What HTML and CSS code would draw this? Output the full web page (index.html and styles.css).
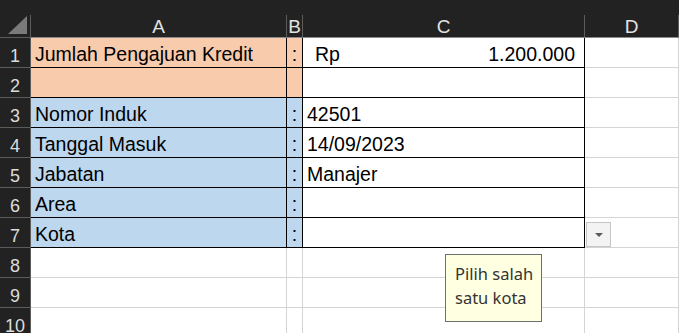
FILE: index.html
```html
<!DOCTYPE html>
<html lang="id">
  <head>
    <meta charset="UTF-8" />
    <title>Pengajuan Kredit</title>
    <link rel="stylesheet" href="styles.css">
  </head>
  <body>
    <div class="sheet">
      <!-- column headers -->
      <div class="corner"><span class="tri"></span></div>
      <div class="colhead">A</div>
      <div class="colhead">B</div>
      <div class="colhead">C</div>
      <div class="colhead">D</div>

      <!-- row 1 -->
      <div class="rownum">1</div>
      <div class="cell peach label">Jumlah Pengajuan Kredit</div>
      <div class="cell peach colon">:</div>
      <div class="cell value money"><span class="cur">Rp</span><span>1.200.000</span></div>
      <div class="cell"></div>

      <!-- row 2 -->
      <div class="rownum">2</div>
      <div class="cell peach label"></div>
      <div class="cell peach colon"></div>
      <div class="cell value"></div>
      <div class="cell"></div>

      <!-- row 3 -->
      <div class="rownum">3</div>
      <div class="cell blue label">Nomor Induk</div>
      <div class="cell blue colon">:</div>
      <div class="cell value">42501</div>
      <div class="cell"></div>

      <!-- row 4 -->
      <div class="rownum">4</div>
      <div class="cell blue label">Tanggal Masuk</div>
      <div class="cell blue colon">:</div>
      <div class="cell value">14/09/2023</div>
      <div class="cell"></div>

      <!-- row 5 -->
      <div class="rownum">5</div>
      <div class="cell blue label">Jabatan</div>
      <div class="cell blue colon">:</div>
      <div class="cell value">Manajer</div>
      <div class="cell"></div>

      <!-- row 6 -->
      <div class="rownum">6</div>
      <div class="cell blue label">Area</div>
      <div class="cell blue colon">:</div>
      <div class="cell value"></div>
      <div class="cell"></div>

      <!-- row 7 -->
      <div class="rownum">7</div>
      <div class="cell blue label">Kota</div>
      <div class="cell blue colon">:</div>
      <div class="cell value active"></div>
      <div class="cell"></div>

      <!-- empty rows -->
      <div class="rownum">8</div>
      <div class="cell"></div><div class="cell"></div><div class="cell"></div><div class="cell"></div>
      <div class="rownum">9</div>
      <div class="cell"></div><div class="cell"></div><div class="cell"></div><div class="cell"></div>
      <div class="rownum">10</div>
      <div class="cell"></div><div class="cell"></div><div class="cell"></div><div class="cell"></div>

      <!-- dropdown arrow + input message -->
      <div class="dropdown"><span class="arrow"></span></div>
      <div class="tooltip">Pilih salah<br />satu kota</div>
    </div>
  </body>
</html>
```

FILE: styles.css
```css
body {
  margin: 0;
  padding: 0;
  background-color: #222222;
  font-family: "Liberation Sans", Arial, sans-serif;
  overflow: hidden;
}

.sheet {
  position: relative;
  display: grid;
  grid-template-columns: 31px 256px 16px 282px 94px;
  grid-template-rows: 23px repeat(10, 30px);
  margin-top: 15px;
}

.corner,
.colhead,
.rownum {
  box-sizing: border-box;
  background-color: #222222;
  color: #e3e3e3;
  border-right: 1px solid #5c5c5c;
  border-bottom: 1px solid #5c5c5c;
}

.corner {
  position: relative;
}

.corner .tri {
  position: absolute;
  right: 3px;
  bottom: 3px;
  width: 0;
  height: 0;
  border-left: 19px solid transparent;
  border-bottom: 18px solid #7a7a7a;
}

.colhead {
  font-size: 19px;
  text-align: center;
  line-height: 24px;
  border-bottom-color: #8a8a8a;
}

.rownum {
  font-size: 18px;
  text-align: center;
  line-height: 24px;
  padding-top: 6px;
  color: #dcdcdc;
}

.cell {
  box-sizing: border-box;
  background-color: white;
  color: black;
  font-size: 19.5px;
  line-height: 24px;
  padding: 4px 4px 0;
  white-space: nowrap;
  border-right: 1px solid #d4d4d4;
  border-bottom: 1px solid #d4d4d4;
}

.peach {
  background-color: #f8cbad;
}

.blue {
  background-color: #bdd7ee;
}

.label,
.colon,
.value {
  border-right-color: #000;
  border-bottom-color: #000;
}

.colon {
  text-align: center;
  padding: 4px 0 0;
}

.money {
  display: flex;
  justify-content: space-between;
  padding-left: 12px;
  padding-right: 9px;
}

.dropdown {
  position: absolute;
  left: 586px;
  top: 207px;
  width: 25px;
  height: 25px;
  box-sizing: border-box;
  background-color: #f3f3f3;
  border: 1px solid #c6c6c6;
}

.dropdown .arrow {
  position: absolute;
  left: 8px;
  top: 10px;
  width: 0;
  height: 0;
  border-left: 4px solid transparent;
  border-right: 4px solid transparent;
  border-top: 4px solid #5a5a5a;
}

.tooltip {
  position: absolute;
  left: 445px;
  top: 239px;
  width: 97px;
  height: 68px;
  box-sizing: border-box;
  background-color: #ffffe1;
  border: 1px solid #6e6e6e;
  font-family: "Noto Sans", sans-serif;
  font-size: 16.5px;
  line-height: 24px;
  color: #333;
  padding: 7px 0 0 9px;
}
```
